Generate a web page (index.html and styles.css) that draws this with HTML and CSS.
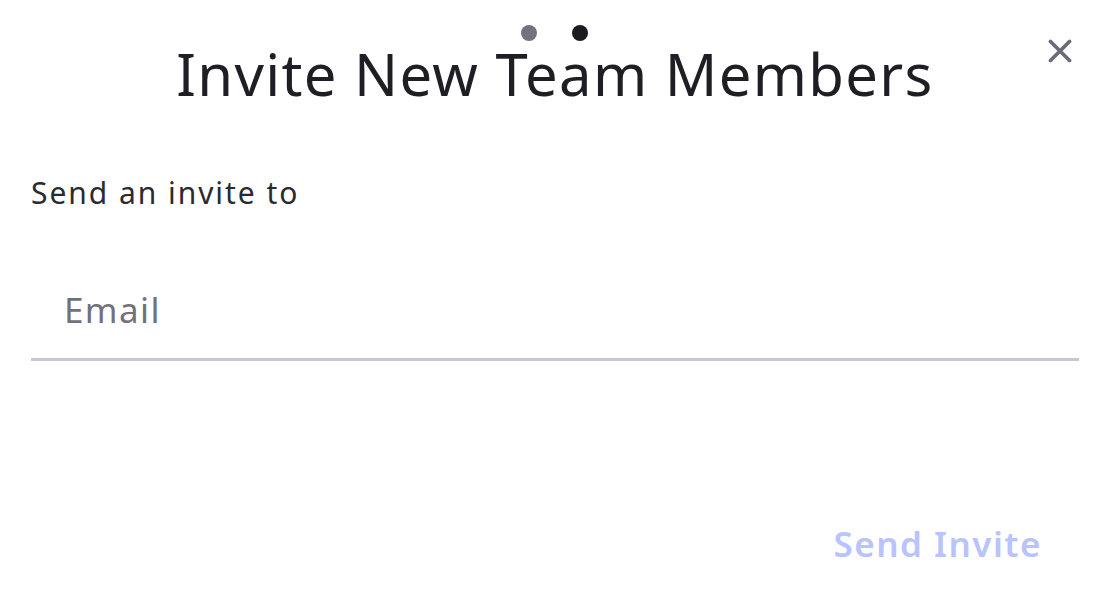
FILE: index.html
```html
<!DOCTYPE html>
<html lang="en">
<head>
    <meta charset="UTF-8">
    <meta name="viewport" content="width=device-width, initial-scale=1.0">
    <title>Invite New Team Members</title>
    <link rel="stylesheet" href="styles.css">
</head>
<body>
    <div class="modal">
        <div class="modal-header">
            <div class="dots">
                <span class="dot"></span>
                <span class="dot active"></span>
            </div>
            <h1>Invite New Team Members</h1>
            <button class="close" type="button" aria-label="Close">
                <svg width="24" height="24" viewBox="0 0 24 24">
                    <path d="M2.5 2.5 L21.5 21.5 M21.5 2.5 L2.5 21.5" stroke="#6b6b78" stroke-width="3.8" stroke-linecap="round" fill="none"/>
                </svg>
            </button>
        </div>

        <form class="invite-form">
            <label for="email">Send an invite to</label>
            <input type="email" id="email" name="email" placeholder="Email">

            <div class="actions">
                <button type="button" class="send" disabled>Send Invite</button>
            </div>
        </form>
    </div>
</body>
</html>
```

FILE: styles.css
```css
body {
    margin: 0;
    padding: 0;
    background-color: #ffffff;
    font-family: "Noto Sans", "Open Sans", sans-serif;
    color: #1e1e24;
}

.modal {
    width: 1108px;
    height: 608px;
    padding: 0 29px 0 31px;
    box-sizing: border-box;
}

.modal-header {
    position: relative;
    height: 150px;
}

.modal-header h1 {
    margin: 0;
    padding-top: 38px;
    text-align: center;
    font-size: 58px;
    font-weight: 400;
    letter-spacing: 1.3px;
    line-height: 72px;
    color: #1e1e24;
}

.dots {
    position: absolute;
    top: 25px;
    left: 490px;
    display: flex;
    gap: 35px;
}

.dot {
    width: 16px;
    height: 16px;
    border-radius: 50%;
    background-color: #73737f;
}

.dot.active {
    background-color: #1b1b20;
}

.close {
    position: absolute;
    top: 39px;
    right: 7px;
    width: 24px;
    height: 24px;
    padding: 0;
    border: none;
    background: none;
    cursor: pointer;
}

.close svg {
    display: block;
}

.invite-form label {
    display: block;
    margin-top: 23px;
    font-size: 30px;
    letter-spacing: 1.95px;
    line-height: 40px;
    color: #2a2a30;
}

.invite-form input {
    display: block;
    width: 100%;
    box-sizing: border-box;
    margin-top: 73px;
    padding: 0 33px 24px;
    border: none;
    border-bottom: 3px solid #c8c8d0;
    font-family: inherit;
    font-size: 35px;
    letter-spacing: 1.4px;
    line-height: 48px;
    outline: none;
}

.invite-form input::placeholder {
    color: #71717e;
}

.actions {
    display: flex;
    justify-content: flex-end;
    margin-top: 159px;
}

.send {
    margin-right: 37px;
    padding: 0;
    border: none;
    background: none;
    font-family: inherit;
    font-size: 35px;
    font-weight: 600;
    letter-spacing: 1.5px;
    color: #b8c3ff;
}
```
